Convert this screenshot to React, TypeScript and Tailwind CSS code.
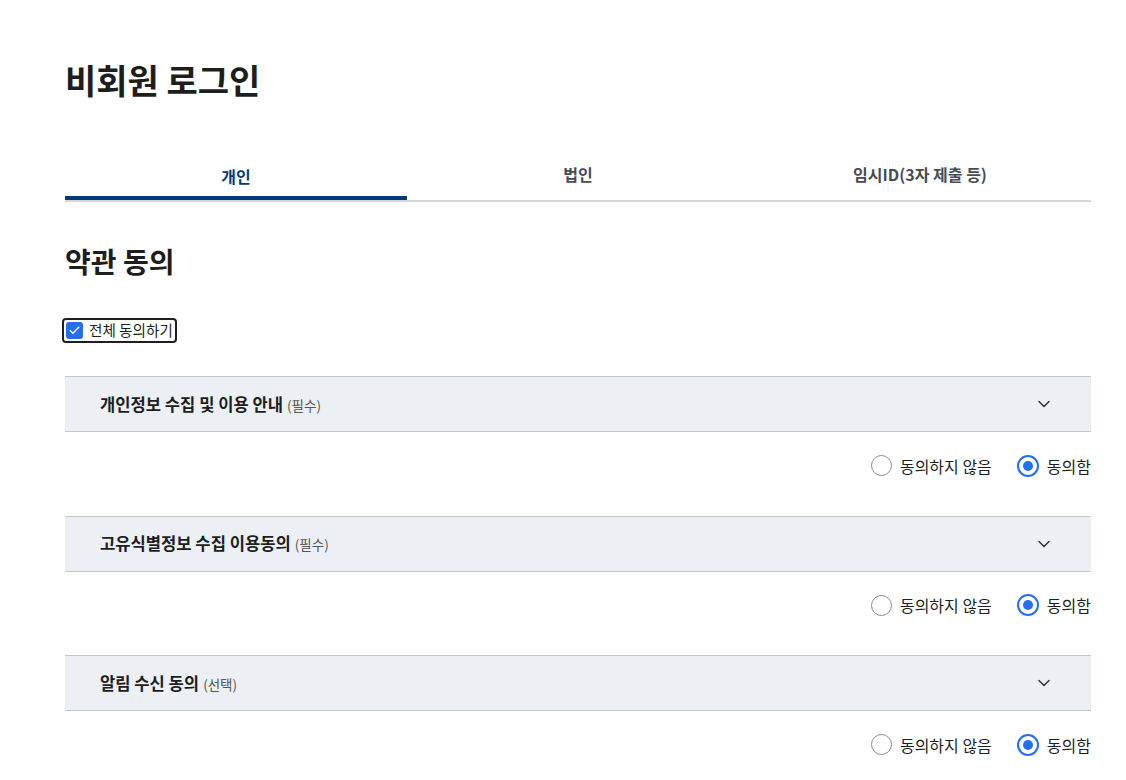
import { ChevronDown, Check } from 'lucide-react';

const sections = [
  { title: '개인정보 수집 및 이용 안내', tag: '(필수)' },
  { title: '고유식별정보 수집 이용동의', tag: '(필수)' },
  { title: '알림 수신 동의', tag: '(선택)' },
];

const tabs = ['개인', '법인', '임시ID(3자 제출 등)'];

function Radio({ checked, label }: { checked?: boolean; label: string }) {
  return (
    <label className="flex items-center gap-[8px] text-[16px] text-[#1e1e1e] leading-none">
      {checked ? (
        <span className="w-[22px] h-[22px] rounded-full border-2 border-[#256ef4] flex items-center justify-center">
          <span className="w-[10px] h-[10px] rounded-full bg-[#256ef4]" />
        </span>
      ) : (
        <span className="w-[21px] h-[21px] rounded-full border border-[#8a8a8a]" />
      )}
      {label}
    </label>
  );
}

export default function App() {
  return (
    <div
      className="bg-white min-h-[780px] px-[65px] pt-[57px]"
      style={{ fontFamily: '"Noto Sans CJK KR", "Noto Sans", sans-serif' }}
    >
      <div className="w-[1026px]">
        <h1 className="text-[34px] font-bold text-[#1e1e1e] leading-[46px]">비회원 로그인</h1>

        {/* Tabs */}
        <div className="mt-[43px] grid grid-cols-3 border-b-2 border-[#d6d6d6]">
          {tabs.map((t, i) => (
            <div
              key={t}
              className={
                i === 0
                  ? 'h-[54px] flex items-center justify-center text-[16px] font-bold text-[#063a74] border-b-4 border-[#063a74] -mb-[2px] pt-[9px]'
                  : 'h-[54px] flex items-center justify-center text-[16px] font-bold text-[#464c53] pt-[2px]'
              }
            >
              {t}
            </div>
          ))}
        </div>

        <h2 className="mt-[40px] text-[28px] font-bold text-[#1e1e1e] leading-[38px]">약관 동의</h2>

        <div className="mt-[38px] -ml-[3px] inline-flex items-center gap-[6px] border-2 border-[#1e1e1e] rounded-[4px] pl-[2px] pr-[2px] h-[25px]">
          <span className="w-[17px] h-[17px] rounded-[3px] bg-[#256ef4] flex items-center justify-center">
            <Check className="w-[13px] h-[13px] text-white" strokeWidth={2.5} />
          </span>
          <span className="text-[14.6px] text-[#1e1e1e] leading-none">전체 동의하기</span>
        </div>

        <div className="mt-[33px] flex flex-col">
          {sections.map((s) => (
            <div key={s.title}>
              <div className="h-[56px] bg-[#eceff4] border-y border-[#c6c6c6] flex items-center justify-between pl-[35px] pr-[37px]">
                <div className="flex items-baseline gap-[4px] leading-none">
                  <span className="text-[16.6px] font-bold text-[#1e1e1e]">{s.title}</span>
                  <span className="text-[13.5px] text-[#555]">{s.tag}</span>
                </div>
                <ChevronDown className="w-[20px] h-[20px] text-[#333]" strokeWidth={1.8} />
              </div>
              <div className="h-[83.5px] flex items-center justify-end gap-[25px] pb-[16px]">
                <Radio label="동의하지 않음" />
                <Radio checked label="동의함" />
              </div>
            </div>
          ))}
        </div>
      </div>
    </div>
  );
}
